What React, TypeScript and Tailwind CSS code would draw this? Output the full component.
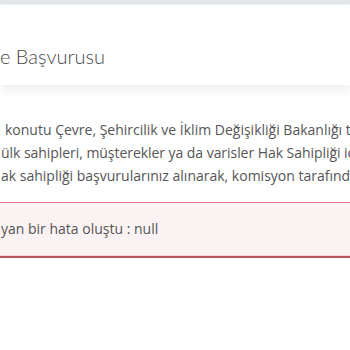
export default function App() {
  return (
    <div className="w-[350px] h-[350px] overflow-hidden bg-white" style={{ fontFamily: '"Open Sans", sans-serif' }}>
      <div className="h-[4px] bg-[#e3e7ea]" />
      <div className="h-[1px] bg-[#f1f3f4]" />
      <div className="relative h-[80px] bg-white shadow-[0_5px_10px_rgba(0,0,0,0.07)]">
        <div className="whitespace-nowrap pt-[37px] text-[20px] leading-[28px] font-light text-[#4a4a4a]" style={{ fontFamily: 'Lato, sans-serif' }}>
          e Başvurusu
        </div>
      </div>
      <div className="pt-[33px] text-[14px] leading-[23px] text-[#555] whitespace-nowrap">
        <div className="pl-[5px]">konutu Çevre, Şehircilik ve İklim Değişikliği Bakanlığı tarafından</div>
        <div className="pl-[1px] tracking-[-0.05px]">ülk sahipleri, müşterekler ya da varisler Hak Sahipliği için</div>
        <div className="pl-[1px]">ak sahipliği başvurularınız alınarak, komisyon tarafından</div>
      </div>
      <div className="mt-[15px] border-t border-[#d9777c] bg-[#fbf3f3] h-[53px] flex items-center">
        <div className="pl-[1px] text-[14px] leading-[20px] text-[#555] whitespace-nowrap">yan bir hata oluştu : null</div>
      </div>
      <div className="h-[1px] bg-[#f3d6d8]" />
      <div className="h-[2px] bg-[#b9545b]" />
    </div>
  );
}
